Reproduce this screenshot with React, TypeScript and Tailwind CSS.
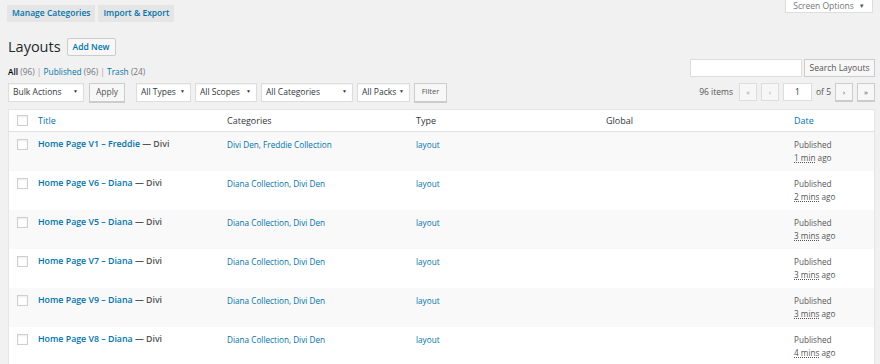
import React from "react";

const rows = [
  { title: "Home Page V1 – Freddie", cats: "Divi Den, Freddie Collection", ago: "1 min", rest: " ago" },
  { title: "Home Page V6 – Diana", cats: "Diana Collection, Divi Den", ago: "2 mins", rest: " ago" },
  { title: "Home Page V5 – Diana", cats: "Diana Collection, Divi Den", ago: "3 mins", rest: " ago" },
  { title: "Home Page V7 – Diana", cats: "Diana Collection, Divi Den", ago: "3 mins", rest: " ago" },
  { title: "Home Page V9 – Diana", cats: "Diana Collection, Divi Den", ago: "3 mins", rest: " ago" },
  { title: "Home Page V8 – Diana", cats: "Diana Collection, Divi Den", ago: "4 mins", rest: " ago" },
];

const filters = [
  { label: "All Types", w: "w-[55px]" },
  { label: "All Scopes", w: "w-[62px]" },
  { label: "All Categories", w: "w-[92px]" },
  { label: "All Packs", w: "w-[53px]" },
];

function Select({ label, w }: { label: string; w: string }) {
  return (
    <div className={`${w} h-[19px] flex items-center justify-between bg-white border border-[#ddd] pl-[4px] pr-[5px] text-[8.5px] text-[#32373c] whitespace-nowrap shadow-[inset_0_1px_2px_rgba(0,0,0,0.05)]`}>
      <span>{label}</span>
      <span className="text-[5px]">▼</span>
    </div>
  );
}

function Checkbox() {
  return <span className="block w-[11px] h-[11px] bg-white border border-[#cfcfcf] shadow-[inset_0_1px_2px_rgba(0,0,0,0.08)]" />;
}

function PageBtn({ children, muted }: { children: React.ReactNode; muted?: boolean }) {
  return (
    <span
      className={`w-[18px] h-[18px] flex items-center justify-center border text-[8px] ${
        muted ? "border-[#ddd] text-[#a0a5aa] bg-[#f7f7f7]" : "border-[#ccc] text-[#555] bg-[#f7f7f7] shadow-[0_1px_0_#ccc]"
      }`}
    >
      {children}
    </span>
  );
}

export default function App() {
  return (
    <div className="w-[880px] h-[364px] overflow-hidden bg-[#f1f1f1] font-['Open_Sans',sans-serif] text-[#555]">
      {/* top bar */}
      <div className="flex items-start justify-between pl-[7px] pr-[7px]">
        <div className="flex gap-[3px] pt-[5px]">
          <span className="h-[17px] px-[5px] flex items-center bg-[#e5e5e5] text-[#0073aa] text-[8.5px] font-semibold whitespace-nowrap">Manage Categories</span>
          <span className="h-[17px] px-[5px] flex items-center bg-[#e5e5e5] text-[#0073aa] text-[8.5px] font-semibold whitespace-nowrap">Import &amp; Export</span>
        </div>
        <div className="w-[88px] h-[13px] flex items-center justify-center gap-[5px] bg-white border border-t-0 border-[#ddd] text-[8.5px] text-[#72777c]">
          Screen Options <span className="text-[6px] text-[#555]">▼</span>
        </div>
      </div>

      <div className="pl-2 pr-[5px]">
        {/* heading */}
        <div className="flex items-center gap-[6px] mt-[16px] h-[18px]">
          <h1 className="text-[14.5px] leading-none text-[#23282d] font-normal">Layouts</h1>
          <span className="h-[18px] px-[5px] flex items-center border border-[#ccc] bg-[#f7f7f7] text-[#0073aa] text-[8.5px] font-semibold rounded-[2px]">Add New</span>
        </div>

        {/* status links + search */}
        <div className="flex items-end justify-between h-[20px] mt-[1px]">
          <div className="text-[8.3px] leading-none pb-[1px] text-[#a0a5aa]">
            <span className="text-[#000] font-semibold">All</span> <span className="text-[#72777c]">(96)</span> |{" "}
            <span className="text-[#0073aa]">Published</span> <span className="text-[#72777c]">(96)</span> |{" "}
            <span className="text-[#0073aa]">Trash</span> <span className="text-[#72777c]">(24)</span>
          </div>
          <div className="flex gap-[2px]">
            <span className="w-[112px] h-[18px] bg-white border border-[#ddd]" />
            <span className="w-[71px] h-[18px] flex items-center justify-center border border-[#ccc] bg-[#f7f7f7] text-[8.5px] text-[#555] whitespace-nowrap">Search Layouts</span>
          </div>
        </div>

        {/* toolbar */}
        <div className="flex items-center justify-between mt-[5px] h-[20px]">
          <div className="flex items-center">
            <Select label="Bulk Actions" w="w-[76px]" />
            <span className="ml-[5px] w-[36px] h-[19px] flex items-center justify-center border border-[#ccc] bg-[#f7f7f7] text-[8.5px] text-[#555] shadow-[0_1px_0_#ccc]">Apply</span>
            <div className="flex items-center gap-[4px] ml-[11px]">
              {filters.map((f) => (
                <Select key={f.label} label={f.label} w={f.w} />
              ))}
              <span className="w-[33px] h-[19px] flex items-center justify-center border border-[#ccc] bg-[#f7f7f7] text-[7.5px] text-[#555] shadow-[0_1px_0_#ccc]">Filter</span>
            </div>
          </div>
          <div className="flex items-center gap-[4px] text-[8.5px] text-[#555]">
            <span className="mr-[2px]">96 items</span>
            <PageBtn muted>«</PageBtn>
            <PageBtn muted>‹</PageBtn>
            <span className="w-[29px] h-[18px] bg-white border border-[#ddd] flex items-center justify-center text-[8.5px] text-[#32373c]">1</span>
            <span>of 5</span>
            <PageBtn>›</PageBtn>
            <PageBtn>»</PageBtn>
          </div>
        </div>

        {/* table */}
        <div className="mt-[7px] bg-white border border-[#e5e5e5] shadow-[0_1px_1px_rgba(0,0,0,0.04)]">
          <div className="grid grid-cols-[21px_189px_189px_190px_188px_1fr] h-[22px] items-center border-b border-[#e1e1e1] text-[9px] text-[#32373c]">
            <div className="flex justify-end pr-[2px]"><Checkbox /></div>
            <div className="pl-2 text-[#0073aa]">Title</div>
            <div className="pl-2">Categories</div>
            <div className="pl-2">Type</div>
            <div className="pl-2">Global</div>
            <div className="pl-2 text-[#0073aa]">Date</div>
          </div>
          {rows.map((r, i) => (
            <div
              key={i}
              className={`grid grid-cols-[21px_189px_189px_190px_188px_1fr] h-[39px] items-start pt-[6px] ${i % 2 === 0 ? "bg-[#f9f9f9]" : "bg-white"}`}
            >
              <div className="flex justify-end pr-[2px] pt-[1px]"><Checkbox /></div>
              <div className="pl-2 text-[8.8px] font-semibold leading-[13px] whitespace-nowrap">
                <span className="text-[#0073aa]">{r.title}</span>
                <span className="text-[#555]"> — Divi</span>
              </div>
              <div className="pl-2 text-[8.2px] leading-[13px] text-[#0073aa]">{r.cats}</div>
              <div className="pl-2 text-[8.2px] leading-[13px] text-[#0073aa]">layout</div>
              <div className="pl-2" />
              <div className="pl-2 text-[8.2px] leading-[13px] text-[#555]">
                <div>Published</div>
                <div>
                  <span className="underline decoration-dotted">{r.ago}</span>
                  {r.rest}
                </div>
              </div>
            </div>
          ))}
        </div>
      </div>
    </div>
  );
}
